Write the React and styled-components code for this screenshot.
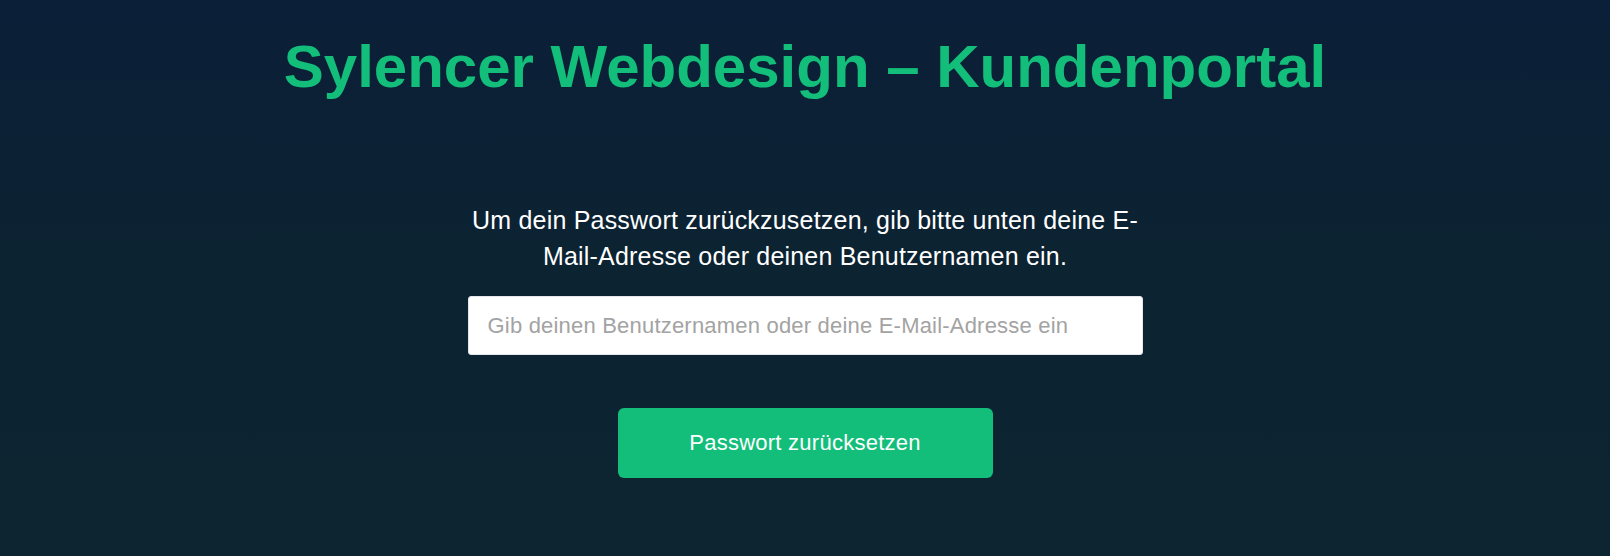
import styled, { createGlobalStyle } from "styled-components";

const GlobalStyle = createGlobalStyle`
  html, body {
    margin: 0;
    padding: 0;
  }
  body {
    font-family: "Liberation Sans", Arial, sans-serif;
    background: #0c2231;
  }
`;

const Page = styled.div`
  min-height: 556px;
  box-sizing: border-box;
  padding-top: 32px;
  background: linear-gradient(180deg, #0b1f38 0%, #0c2332 45%, #0c2530 100%);
  display: flex;
  flex-direction: column;
  align-items: center;
`;

const Title = styled.h1`
  margin: 0 0 101px;
  font-size: 60px;
  line-height: 69px;
  font-weight: 700;
  color: #12be7a;
  text-align: center;
`;

const Form = styled.form`
  width: 675px;
  display: flex;
  flex-direction: column;
  align-items: center;
`;

const Intro = styled.p`
  margin: 0 0 22px;
  font-size: 25px;
  line-height: 36px;
  letter-spacing: 0.2px;
  color: #ffffff;
  text-align: center;
`;

const Field = styled.input`
  width: 100%;
  height: 59px;
  box-sizing: border-box;
  padding: 0 19px;
  border: 1px solid #e3e6ea;
  border-radius: 3px;
  background: #ffffff;
  font-family: inherit;
  font-size: 22px;
  letter-spacing: 0.2px;
  color: #333;
  outline: none;

  &::placeholder {
    color: #a3a3a3;
  }
`;

const Submit = styled.button`
  margin-top: 53px;
  width: 375px;
  height: 70px;
  border: none;
  border-radius: 6px;
  background: #12be7a;
  color: #ffffff;
  font-family: inherit;
  font-size: 22px;
  letter-spacing: 0.25px;
  cursor: pointer;
`;

export default function App() {
  return (
    <>
      <GlobalStyle />
      <Page>
        <Title>Sylencer Webdesign – Kundenportal</Title>
        <Form onSubmit={(e) => e.preventDefault()}>
          <Intro>
            Um dein Passwort zurückzusetzen, gib bitte unten deine E-Mail-Adresse oder deinen
            Benutzernamen ein.
          </Intro>
          <Field type="text" placeholder="Gib deinen Benutzernamen oder deine E-Mail-Adresse ein" />
          <Submit type="submit">Passwort zurücksetzen</Submit>
        </Form>
      </Page>
    </>
  );
}
